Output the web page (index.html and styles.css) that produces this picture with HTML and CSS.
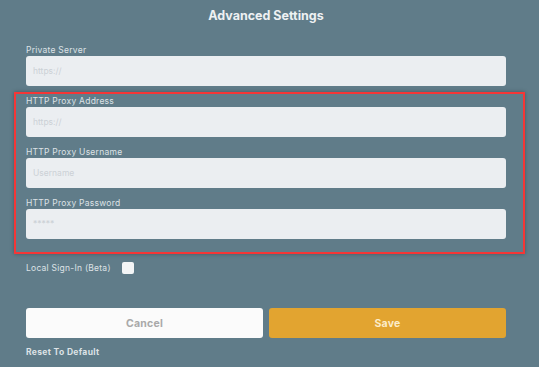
FILE: index.html
```html
<!DOCTYPE html>
<html>
<head>
    <title>Advanced Settings</title>
    <link rel="stylesheet" href="styles.css">
</head>
<body>
    <div class="settings">
        <h1 class="title">Advanced Settings</h1>

        <div class="field">
            <label class="label" for="server">Private Server</label>
            <input class="input" type="text" id="server" placeholder="https://">
        </div>

        <!-- Proxy group -->
        <div class="proxy-box">
            <div class="field">
                <label class="label" for="proxy">HTTP Proxy Address</label>
                <input class="input" type="text" id="proxy" placeholder="https://">
            </div>
            <div class="field">
                <label class="label" for="user">HTTP Proxy Username</label>
                <input class="input" type="text" id="user" placeholder="Username">
            </div>
            <div class="field">
                <label class="label" for="pass">HTTP Proxy Password</label>
                <input class="input" type="password" id="pass" placeholder="*****">
            </div>
        </div>

        <div class="check-row">
            <span class="label">Local Sign-In (Beta)</span>
            <span class="checkbox"></span>
        </div>

        <div class="buttons">
            <button class="btn cancel">Cancel</button>
            <button class="btn save">Save</button>
        </div>

        <div class="reset">Reset To Default</div>
    </div>
</body>
</html>
```

FILE: styles.css
```css
body {
    margin: 0;
    padding: 0;
    background-color: #607c89;
    font-family: Inter, "Noto Sans", sans-serif;
}

.settings {
    width: 480px;
    margin-left: 26px;
    display: flex;
    flex-direction: column;
}

.title {
    margin: 0;
    height: 32px;
    line-height: 32px;
    text-align: center;
    font-size: 12.5px;
    font-weight: 700;
    color: #eef1f3;
}

.field {
    display: flex;
    flex-direction: column;
}

.settings > .field {
    margin-top: 12px;
}

.label {
    font-size: 8.5px;
    line-height: 12px;
    color: #dde2e6;
    letter-spacing: 0.25px;
}

.input {
    margin-top: 0;
    height: 30px;
    box-sizing: border-box;
    border: none;
    border-radius: 3px;
    background-color: #ebeef1;
    padding: 0 7px;
    font-family: inherit;
    font-size: 8.5px;
    color: #555;
    outline: none;
}

.input::placeholder {
    color: #cbd1d6;
}

.proxy-box {
    margin: 6px -19px 0 -12px;
    padding: 1px 17px 13px 10px;
    border: 2px solid #f53636;
    box-shadow: 0 0 4px rgba(0, 0, 0, 0.3);
    display: flex;
    flex-direction: column;
    gap: 9px;
}

.check-row {
    margin-top: 8px;
    height: 12px;
    display: flex;
    align-items: center;
    gap: 11px;
}

.checkbox {
    width: 12px;
    height: 12px;
    border-radius: 2px;
    background-color: #f3f5f6;
}

.buttons {
    margin-top: 34px;
    display: flex;
    gap: 6px;
}

.btn {
    flex: 1;
    height: 30px;
    border: none;
    border-radius: 3px;
    font-family: inherit;
    font-size: 10.5px;
    font-weight: 700;
    letter-spacing: 0.2px;
    cursor: pointer;
}

.cancel {
    background-color: #fbfbfb;
    color: #a9a9a9;
}

.save {
    background-color: #e2a430;
    color: #fcecc9;
}

.reset {
    margin-top: 8px;
    line-height: 12px;
    font-size: 8.5px;
    font-weight: 700;
    letter-spacing: 0.35px;
    color: #dde2e6;
}
```
